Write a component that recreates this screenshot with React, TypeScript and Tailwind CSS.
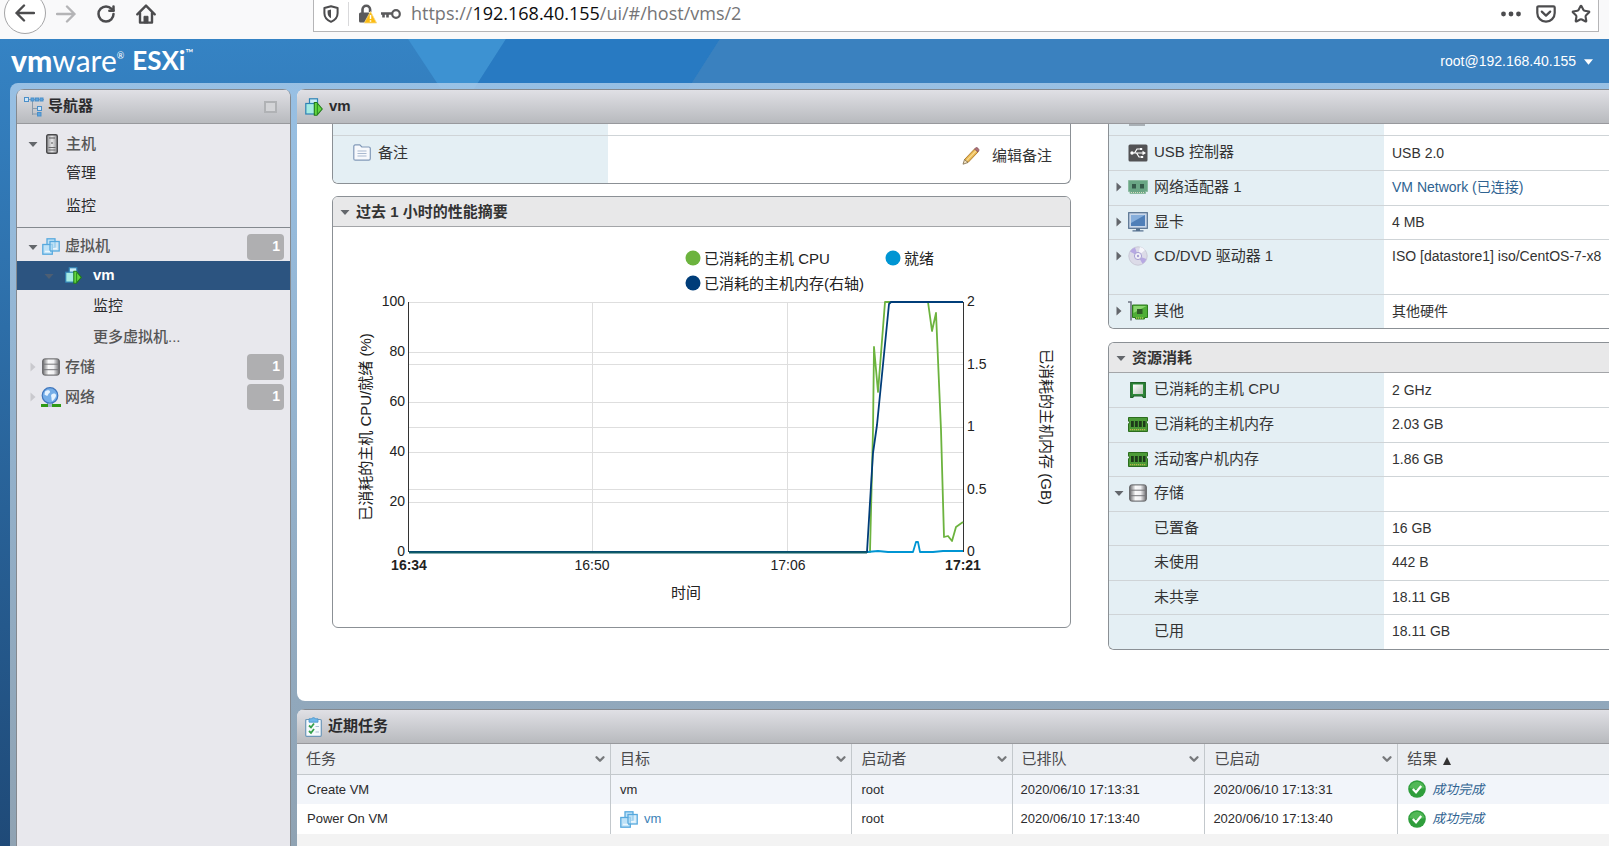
import { ChevronDown, RotateCw, Star } from 'lucide-react';
import React, { useState } from 'react';

type IconProps = { className?: string };

const BackIcon = ({ className }: IconProps) => (
  <svg viewBox="0 0 20 20" className={className} fill="none" stroke="currentColor" strokeWidth="2.4" strokeLinecap="round" strokeLinejoin="round">
    <path d="M19 10H1.5M9 2.5 1.5 10 9 17.5" />
  </svg>
);

const ForwardIcon = ({ className }: IconProps) => (
  <svg viewBox="0 0 20 20" className={className} fill="none" stroke="currentColor" strokeWidth="2.4" strokeLinecap="round" strokeLinejoin="round">
    <path d="M1 10h17.5M11 2.5l7.5 7.5-7.5 7.5" />
  </svg>
);

const HomeIcon = ({ className }: IconProps) => (
  <svg viewBox="0 0 20 20" className={className} fill="none" stroke="currentColor" strokeWidth="2.4" strokeLinecap="round" strokeLinejoin="round">
    <path d="M1.3 10.3 10 1.6l8.7 8.7" />
    <path d="M4 9v9.6h12V9" />
    <path d="M8 18.5v-6.2h4v6.2z" fill="currentColor" strokeWidth="1" />
  </svg>
);

const ShieldIcon = ({ className }: IconProps) => (
  <svg viewBox="0 0 16 18" className={className} fill="none" stroke="currentColor" strokeWidth="2">
    <path d="M8 1.2 14.6 3v5.2c0 4.2-2.8 6.9-6.6 8.6-3.8-1.7-6.6-4.4-6.6-8.6V3z" strokeLinejoin="round" />
    <path d="M8 4.6v8.6c-2.2-1.3-3.4-2.9-3.4-5.2V5.4z" fill="currentColor" stroke="none" />
  </svg>
);

const LockWarningIcon = ({ className }: IconProps) => (
  <svg viewBox="0 0 19 20" className={className}>
    <path d="M4.5 9V5.500a3.800 3.800 0 0 1 7.600 0V8" fill="none" stroke="#5a5a5c" strokeWidth="2.600" />
    <rect x="1" y="8.500" width="11" height="10" rx="1.500" fill="#5a5a5c" />
    <path d="M12.500 7.500 18.600 19H6.200z" fill="#fdbc11" stroke="#f5d98a" strokeWidth=".8" strokeLinejoin="round" />
    <path d="M12.500 11v4M12.500 16.300v1.400" stroke="#fff" strokeWidth="1.500" />
  </svg>
);

const KeyIcon = ({ className }: IconProps) => (
  <svg viewBox="0 0 20 12" className={className} fill="none" stroke="#5a5a5c">
    <circle cx="15" cy="6" r="3.800" strokeWidth="2.200" />
    <path d="M0 5.500h11.500M2.500 6v3.500M6.500 6v3.500" strokeWidth="2.600" />
  </svg>
);

const DotsIcon = ({ className }: IconProps) => (
  <svg viewBox="0 0 20 6" className={className} fill="currentColor">
    <circle cx="2.500" cy="3" r="2.400" />
    <circle cx="10" cy="3" r="2.400" />
    <circle cx="17.500" cy="3" r="2.400" />
  </svg>
);

const PocketIcon = ({ className }: IconProps) => (
  <svg viewBox="0 0 20 18" className={className} fill="none" stroke="currentColor" strokeWidth="2.200" strokeLinecap="round" strokeLinejoin="round">
    <path d="M2.600 1.300h14.800c.8 0 1.300.5 1.300 1.300V8a8.700 8.700 0 0 1-17.400 0V2.600c0-.8.5-1.300 1.300-1.300z" />
    <path d="m5.800 6.600 4.200 4 4.200-4" />
  </svg>
);

const TreeIcon = ({ className }: IconProps) => (
  <svg viewBox="0 0 20 20" className={className} fill="none" stroke="#4b8fc9">
    <path d="M5 2.500h15M8.500 4v14M8.500 11.500h5M8.500 17h5" stroke="#8a9bab" />
    <rect x=".5" y=".5" width="4" height="4" fill="#cfe6f8" />
    <rect x="7" y="1" width="3" height="3" fill="#5ea4dc" />
    <rect x="11.500" y="1" width="3" height="3" fill="#5ea4dc" />
    <rect x="16" y="1" width="3" height="3" fill="#5ea4dc" />
    <rect x="13.500" y="9.500" width="4" height="4" fill="#cfe6f8" />
    <rect x="13.500" y="15.500" width="3.500" height="3.500" fill="#5ea4dc" />
  </svg>
);

const HostIcon = ({ className }: IconProps) => (
  <svg viewBox="0 0 12 20" className={className}>
    <defs>
      <linearGradient id="tower">
        <stop offset="0" stopColor="#8d8d90" />
        <stop offset=".5" stopColor="#e8e8ea" />
        <stop offset="1" stopColor="#8d8d90" />
      </linearGradient>
    </defs>
    <rect x=".7" y=".7" width="10.600" height="18.600" rx="1.500" fill="url(#tower)" stroke="#4a4a4c" strokeWidth="1.400" />
    <path d="M3 4h6" stroke="#5b5b5d" strokeWidth="1.200" />
    <path d="M2.500 13.500h7M2.500 16h7" stroke="#6b6b6d" strokeWidth="1.200" />
    <circle cx="6" cy="9" r=".8" fill="#444" />
  </svg>
);

const VmsIcon = ({ className }: IconProps) => (
  <svg viewBox="0 0 18 17" className={className} fill="#bfe2f7" stroke="#57a9de" strokeWidth="1.300">
    <rect x="5" y=".8" width="8" height="9" />
    <rect x=".8" y="6.500" width="9.500" height="9.700" />
    <rect x="8" y="3.500" width="9.200" height="9.500" fillOpacity=".6" />
    <path d="M3 13.500h5M11 10.500h4" stroke="#eaf6fd" />
  </svg>
);

const VmRunningIcon = ({ className }: IconProps) => (
  <svg viewBox="0 0 18 18" className={className}>
    <rect x="4.500" y=".8" width="8" height="8" fill="#c9ecf7" stroke="#2f83b5" strokeWidth="1.200" />
    <rect x=".8" y="5.500" width="10" height="10.500" fill="#a5ebe3" stroke="#2f83b5" strokeWidth="1.200" />
    <path d="M9.300 4.500h2.500L17.300 11l-5.500 6.300H9.300z" fill="#62d63f" stroke="#207a1b" strokeWidth="1.100" strokeLinejoin="round" />
    <path d="M12.300 6v10" stroke="#207a1b" strokeWidth=".9" />
  </svg>
);

const StorageIcon = ({ className }: IconProps) => (
  <svg viewBox="0 0 18 18" className={className}>
    <defs>
      <linearGradient id="metal">
        <stop offset="0" stopColor="#6f6f72" />
        <stop offset=".35" stopColor="#fafafa" />
        <stop offset=".65" stopColor="#f0f0f2" />
        <stop offset="1" stopColor="#6b6b6e" />
      </linearGradient>
    </defs>
    <rect x=".7" y=".9" width="16.600" height="16.200" rx="2" fill="url(#metal)" stroke="#5c5c5e" />
    <path d="M1 6.200h16M1 11.700h16" stroke="#77777a" />
  </svg>
);

const NetworkIcon = ({ className }: IconProps) => (
  <svg viewBox="0 0 20 20" className={className}>
    <circle cx="9" cy="8.500" r="7.800" fill="#76aee8" stroke="#3f76bd" strokeWidth="1.200" />
    <path d="M4 4.500c2.500-2 4.500-1.500 5 0s-2 2-2 3.500-2.500.5-3.500-.5zM10.500 7.500c2-1.500 4-1 4.500.5s-1.500 4-3 5.500-1.500-1.500-1.500-2.500-1-2.500 0-3.500z" fill="#e6f3ff" />
    <path d="M6 16.300h6v1.500H6z" fill="#3f76bd" />
    <path d="M0 17h20v3H0z" fill="#2f9a16" />
    <path d="M7 16.500h4v3.500H7z" fill="#9fb6c9" />
  </svg>
);

const NotesIcon = ({ className }: IconProps) => (
  <svg viewBox="0 0 18 17" className={className}>
    <path d="M.8 2.500c0-1 .5-1.700 1.500-1.700h4.500l2 2.200h7c1 0 1.500.5 1.500 1.500v10c0 1-.5 1.700-1.500 1.700H2.300c-1 0-1.500-.5-1.500-1.500z" fill="#f7f9fc" stroke="#8199b8" strokeWidth="1.200" />
    <path d="M4.500 7h9M4.500 9.500h9M4.500 12h9" stroke="#a9b9cf" />
  </svg>
);

const PencilIcon = ({ className }: IconProps) => (
  <svg viewBox="0 0 18 18" className={className}>
    <path d="m2.500 12.500 10-10.500 3.500 3L6 15.500z" fill="#e9b851" stroke="#a9772c" strokeWidth=".9" />
    <path d="m4.300 13.800 10-10.300" stroke="#f9dc94" strokeWidth="1.200" />
    <path d="m12.500 2 1.500-1.300c1-.6 3.400 1.400 2.900 2.700L16 5z" fill="#b0737a" stroke="#86525a" strokeWidth=".8" />
    <path d="m2.500 12.500-1.500 4.700L6 15.500z" fill="#f4e3c2" stroke="#7b6a48" strokeWidth=".8" />
  </svg>
);

const UsbIcon = ({ className }: IconProps) => (
  <svg viewBox="0 0 20 18" className={className}>
    <rect x=".5" y=".5" width="19" height="17" rx="1.500" fill="#525254" />
    <path d="M3 9h12M6.500 9l2.500-4h3M8.500 9l2.500 4h2.500" stroke="#fff" strokeWidth="1.200" fill="none" />
    <circle cx="4" cy="9" r="1.700" fill="#fff" />
    <path d="m14.500 6.800 3.500 2.200-3.500 2.200zM12 4h2.200v2H12zM13 12h2.200v2H13z" fill="#fff" />
  </svg>
);

const NicIcon = ({ className }: IconProps) => (
  <svg viewBox="0 0 20 14" className={className}>
    <path d="M.5.5h19v11h-2v2H2v-2H.5z" fill="#6aa685" stroke="#8bbba0" />
    <rect x="4" y="4" width="4" height="4.500" fill="#35594a" />
    <rect x="12" y="4" width="4" height="4.500" fill="#35594a" />
    <path d="M3 12.500h13" stroke="#d7dcc0" strokeDasharray="1 1" />
  </svg>
);

const MonitorIcon = ({ className }: IconProps) => (
  <svg viewBox="0 0 20 20" className={className}>
    <rect x=".7" y=".7" width="18.600" height="15.600" fill="#c9d8ea" stroke="#55718f" strokeWidth="1.200" />
    <rect x="3" y="3" width="14" height="11" fill="#4f7fb8" />
    <path d="M3 3h14L3 11z" fill="#86aedb" />
    <path d="M8 16.500h4v2H8zM4.500 18.300h11v1.200h-11z" fill="#55718f" />
  </svg>
);

const DiscIcon = ({ className }: IconProps) => (
  <svg viewBox="0 0 20 20" className={className}>
    <circle cx="10" cy="10" r="9.200" fill="#dcdbe8" stroke="#c9c8d6" />
    <path d="M10 10 2 5.500A9 9 0 0 1 7 1.400zM10 10l8.500 3a9 9 0 0 1-4 4.800z" fill="#b7a9e2" />
    <path d="m10 10 2-9a9 9 0 0 1 5 3z" fill="#f6f6fb" />
    <circle cx="10" cy="10" r="3.600" fill="#f2f1f8" stroke="#a79fd2" />
    <circle cx="10" cy="10" r="1.200" fill="#a79fd2" />
  </svg>
);

const CardIcon = ({ className }: IconProps) => (
  <svg viewBox="0 0 20 20" className={className}>
    <path d="M0 1h3v18.500" fill="none" stroke="#6c7480" strokeWidth="1.600" />
    <path d="M4.500 4h15v12.500h-3v1.500h-9v-1.500h-3z" fill="#4fae37" stroke="#2c7b1d" />
    <path d="M5.500 5h13L5.500 12z" fill="#8bd66f" />
    <rect x="9" y="8" width="5.500" height="5" fill="#2f5c27" />
    <path d="M8 17h8" stroke="#e1cf5d" strokeDasharray="1 1" />
  </svg>
);

const CpuIcon = ({ className }: IconProps) => (
  <svg viewBox="0 0 16 16" className={className}>
    <defs>
      <linearGradient id="die" x2="1" y2="1">
        <stop offset="0" stopColor="#ffffff" />
        <stop offset="1" stopColor="#b9c4b9" />
      </linearGradient>
    </defs>
    <path d="M.7.7h14.600v14.600h-1.800l-1.300-1.500H4l-1.300 1.500H.7z" fill="#2f8a3a" stroke="#1f6428" strokeWidth="1.200" />
    <rect x="3" y="2.500" width="10" height="9.500" fill="url(#die)" />
  </svg>
);

const MemoryIcon = ({ className }: IconProps) => (
  <svg viewBox="0 0 20 15" className={className}>
    <path d="M.5.5h19v3.500l-1.200 1.200L19.500 7v7.500H.5V7l1.200-1.800L.5 4z" fill="#4b9a37" stroke="#2c6d1e" />
    <path d="M3 4h2.800v6H3zM7 4h2.800v6H7zM11 4h2.800v6H11zM15 4h2.500v6H15z" fill="#1d3b1a" />
    <path d="M2 12.700h16" stroke="#b9b64a" strokeWidth="1.200" strokeDasharray="1.200 .8" />
  </svg>
);

const TasksIcon = ({ className }: IconProps) => (
  <svg viewBox="0 0 17 20" className={className}>
    <rect x=".7" y="2.500" width="15.600" height="16.800" rx="1" fill="#f6fafd" stroke="#6d97b8" strokeWidth="1.200" />
    <path d="M4 1.800h2.500C7 .3 10 .3 10.500 1.800H13v3.400H4z" fill="#6db7ea" stroke="#4892c8" strokeWidth=".8" />
    <path d="m4 8.500 2 2 3-4M4 14l2 2 3-4" fill="none" stroke="#35a04b" strokeWidth="1.800" />
    <path d="M10.500 9.500h3.500M10.500 15h3.500" stroke="#a9c0d2" />
  </svg>
);

const SuccessIcon = ({ className }: IconProps) => (
  <svg viewBox="0 0 18 18" className={className}>
    <circle cx="9" cy="9" r="8.800" fill="#2f9e3c" />
    <path d="M1.500 8a7.600 7.600 0 0 1 15 0c-4 1.500-11 1.500-15 0z" fill="#52b857" />
    <path d="m4.800 9 3.200 3.300 5.200-6.300" fill="none" stroke="#fff" strokeWidth="2.200" />
  </svg>
);

const Caret = ({ open, faded }: { open?: boolean; faded?: boolean }) => (
  <svg viewBox="0 0 10 10" className={`size-[10px] shrink-0 ${faded ? 'text-[#c9c9ce]' : 'text-[#63666b]'}`} fill="currentColor">
    {open ? <path d="M.5 3h9L5 8z" /> : <path d="M2.500.5v9L7.500 5z" />}
  </svg>
);

interface DetailRow {
  label: string;
  value: string;
  icon?: React.FC<IconProps>;
  iconClass?: string;
  caret?: 'open' | 'closed';
  link?: boolean;
  tall?: boolean;
}

const hardware: DetailRow[] = [
  { label: 'USB 控制器', value: 'USB 2.0', icon: UsbIcon, iconClass: 'h-[18px] w-5' },
  { label: '网络适配器 1', value: 'VM Network (已连接)', icon: NicIcon, iconClass: 'h-[14px] w-5', caret: 'closed', link: true },
  { label: '显卡', value: '4 MB', icon: MonitorIcon, iconClass: 'size-5', caret: 'closed' },
  { label: 'CD/DVD 驱动器 1', value: 'ISO [datastore1] iso/CentOS-7-x8', icon: DiscIcon, iconClass: 'size-5', caret: 'closed', tall: true },
  { label: '其他', value: '其他硬件', icon: CardIcon, iconClass: 'size-5', caret: 'closed' },
];

const resources: DetailRow[] = [
  { label: '已消耗的主机 CPU', value: '2 GHz', icon: CpuIcon, iconClass: 'size-4' },
  { label: '已消耗的主机内存', value: '2.03 GB', icon: MemoryIcon, iconClass: 'h-[15px] w-5' },
  { label: '活动客户机内存', value: '1.86 GB', icon: MemoryIcon, iconClass: 'h-[15px] w-5' },
  { label: '存储', value: '', icon: StorageIcon, iconClass: 'size-[18px]', caret: 'open' },
  { label: '已置备', value: '16 GB' },
  { label: '未使用', value: '442 B' },
  { label: '未共享', value: '18.11 GB' },
  { label: '已用', value: '18.11 GB' },
];

const DetailTable = ({ rows }: { rows: DetailRow[] }) => (
  <table className="w-full table-fixed border-collapse">
    <tbody>
      {rows.map((row) => {
        const Icon = row.icon;
        return (
          <tr
            key={row.label}
            className={`border-b border-[#cfd4d7] last:border-b-0 ${row.tall ? 'h-[55px]' : 'h-[34px] even:h-[35px]'}`}
          >
            <th scope="row" className="w-[275px] bg-[#e4eff4] p-0 text-left align-top font-normal">
              <div className="flex h-[33px] items-center pl-[2px] text-[15px] text-[#333]">
                <span className="flex w-4 justify-center">
                  {row.caret && (
                    <button type="button" aria-label={`展开 ${row.label}`}>
                      <Caret open={row.caret === 'open'} />
                    </button>
                  )}
                </span>
                <span className="flex w-[27px] items-center pr-[5px]">
                  {Icon && <Icon className={`mx-auto shrink-0 ${row.iconClass}`} />}
                </span>
                {row.label}
              </div>
            </th>
            <td className="overflow-hidden p-0 align-top text-sm whitespace-nowrap text-[#333]">
              <div className="flex h-[33px] items-center pl-2">
                {row.link ? (
                  <a href="#network" className="text-[#2f6391]">{row.value}</a>
                ) : (
                  row.value
                )}
              </div>
            </td>
          </tr>
        );
      })}
    </tbody>
  </table>
);

const cpuLine = '76,325 537,325 540,203 541,120 545,165 552,75 595,75 599,104 603,86 608,203 611,310 615,309 619,314 623,300 630,295';
const memoryLine = '76,325 534,325 540,226 544,198 556,77 558,75 630,75';
const readyLine = '76,325 534,325 545,324 555,325 580,325 583,315 585,315 587,325 600,325 610,324 630,324';

const PerformanceChart = () => (
  <svg viewBox="0 0 737 400" className="block w-full" role="img" aria-label="过去 1 小时的性能摘要">
    <g stroke="#dedede">
      {[75, 125, 175, 225, 275].map((y) => <path key={y} d={`M76 ${y}.5H630`} />)}
      {[137, 200, 262].map((y) => <path key={y} d={`M76 ${y}.5H630`} />)}
      <path d="M259.500 75V325M454.500 75V325" />
    </g>
    <path d="M75.500 75V325M630.500 75V325" stroke="#333" fill="none" />
    <g fill="none" strokeWidth="1.800" strokeLinejoin="round">
      <polyline points={cpuLine} stroke="#6cb33e" />
      <polyline points={readyLine} stroke="#0095d3" />
      <polyline points={memoryLine} stroke="#003d79" />
      <path d="M76 325.500H534" stroke="#0f5c66" />
    </g>
    <g fontSize="14" fill="#222">
      {[0, 20, 40, 60, 80, 100].map((v) => (
        <text key={v} x="72" y={329 - v * 2.5} textAnchor="end">{v}</text>
      ))}
      {[0, 0.5, 1, 1.5, 2].map((v) => (
        <text key={v} x="634" y={329 - v * 125}>{v}</text>
      ))}
      <g textAnchor="middle">
        <text x="76" y="343" fontWeight="bold">16:34</text>
        <text x="259" y="343">16:50</text>
        <text x="455" y="343">17:06</text>
        <text x="630" y="343" fontWeight="bold">17:21</text>
      </g>
    </g>
    <g fontSize="15" fill="#222">
      <circle cx="360" cy="31" r="7.500" fill="#6cb33e" />
      <text x="371" y="37">已消耗的主机 CPU</text>
      <circle cx="560" cy="31" r="7.500" fill="#0095d3" />
      <text x="571" y="37">就绪</text>
      <circle cx="360" cy="56" r="7.500" fill="#003d79" />
      <text x="371" y="62">已消耗的主机内存(右轴)</text>
      <g textAnchor="middle">
        <text x="353" y="371">时间</text>
        <text transform="translate(38 200) rotate(-90)">已消耗的主机 CPU/就绪 (%)</text>
        <text transform="translate(708 200) rotate(90)">已消耗的主机内存 (GB)</text>
      </g>
    </g>
  </svg>
);

const BrowserBar = () => {
  const [url, setUrl] = useState('https://192.168.40.155/ui/#/host/vms/2');
  const [scheme, host, path] = url.match(/^(\w+:\/\/)?([^/]*)(.*)$/)?.slice(1) ?? [];

  return (
    <div className="flex h-[39px] items-start overflow-hidden bg-[#f9f9fa] pr-[10px] text-[#4c4c4e]">
      <button type="button" aria-label="后退" className="-mt-2 ml-1 flex size-[42px] shrink-0 items-center justify-center rounded-full border border-[#a5a5a7] bg-white">
        <BackIcon className="size-5" />
      </button>
      <div className="flex h-[27px] w-[267px] shrink-0 items-center gap-5 pl-[10px]">
        <button type="button" aria-label="前进" className="text-[#b4b4b6]">
          <ForwardIcon className="size-5" />
        </button>
        <button type="button" aria-label="刷新">
          <RotateCw className="size-5" strokeWidth={3} />
        </button>
        <button type="button" aria-label="主页">
          <HomeIcon className="size-5" />
        </button>
      </div>
      <div className="flex h-8 min-w-0 flex-1 items-center border border-t-0 border-[#b5b5b7] bg-white pb-1">
        <ShieldIcon className="ml-[9px] h-[18px] w-4 shrink-0" />
        <span className="mr-[9px] ml-[9px] h-6 w-px bg-[#d9d9db]" />
        <LockWarningIcon className="h-5 w-[19px] shrink-0" />
        <KeyIcon className="ml-1 h-3 w-5 shrink-0" />
        <div className="relative ml-[10px] flex-1 font-['Open_Sans','Noto_Sans',sans-serif] text-[18px] leading-[27px]">
          <input
            type="text"
            aria-label="地址"
            value={url}
            onChange={(e) => setUrl(e.target.value)}
            className="block w-full bg-transparent text-transparent caret-black outline-none"
          />
          <span aria-hidden="true" className="pointer-events-none absolute inset-0 whitespace-pre text-[#757577]">
            {scheme}
            <span className="text-[#0c0c0d]">{host}</span>
            {path}
          </span>
        </div>
        <div className="flex items-center gap-[15px] pr-[7px]">
          <button type="button" aria-label="页面操作"><DotsIcon className="h-[6px] w-5" /></button>
          <button type="button" aria-label="保存到 Pocket"><PocketIcon className="h-[18px] w-5" /></button>
          <button type="button" aria-label="收藏"><Star className="size-5" strokeWidth={2.5} /></button>
        </div>
      </div>
    </div>
  );
};

const PanelHeader = ({ children }: { children: React.ReactNode }) => (
  <div className="flex h-[35px] shrink-0 items-center border-t border-b border-t-[#84898f] border-b-[#98999d] bg-linear-to-b from-[#e0e0e5] to-[#b8babe] text-[15px] font-bold text-[#2b2b2d]">
    {children}
  </div>
);

const Badge = ({ children }: { children: React.ReactNode }) => (
  <span className="mr-[6px] ml-auto flex h-[26px] w-[37px] justify-end rounded bg-[#afafb1] pr-1 text-sm leading-[24px] font-bold text-white">
    {children}
  </span>
);

const Navigator = () => (
  <nav className="flex w-[275px] shrink-0 flex-col overflow-hidden rounded-t-lg border-x border-[#84898f] bg-[#e8e8ed] text-[15px]">
    <PanelHeader>
      <TreeIcon className="mr-1 ml-[7px] size-5" />
      导航器
      <button type="button" aria-label="最小化" className="mr-[13px] ml-auto h-3 w-[13px] border-2 border-[#b0b2b5] bg-[#d3d4d7]" />
    </PanelHeader>
    <ul className="border-b border-[#84898f] pt-[7px] pb-1">
      <li className="flex h-[26px] items-center font-medium text-[#555]">
        <button type="button" aria-label="折叠主机" className="ml-[11px]"><Caret open /></button>
        <HostIcon className="mr-2 ml-2 h-5 w-3" />
        <a href="#host">主机</a>
      </li>
      <li className="flex h-8 items-center pl-[49px] text-[#2b2b2d]"><a href="#manage">管理</a></li>
      <li className="flex h-[34px] items-center pl-[49px] text-[#2b2b2d]"><a href="#monitor">监控</a></li>
    </ul>
    <ul className="pt-1">
      <li className="flex h-[29px] items-center font-medium text-[#555]">
        <button type="button" aria-label="折叠虚拟机" className="ml-[11px]"><Caret open /></button>
        <VmsIcon className="mx-1 h-[17px] w-[18px]" />
        <a href="#vms" className="pl-[1px]">虚拟机</a>
        <Badge>1</Badge>
      </li>
      <li className="flex h-[29px] items-center bg-[#2c5480] font-bold text-white">
        <button type="button" aria-label="折叠 vm" className="ml-[27px] opacity-60"><Caret open /></button>
        <VmRunningIcon className="mr-[11px] ml-[11px] size-[17px]" />
        <a href="#vm">vm</a>
      </li>
      <li className="flex h-8 items-center pl-[76px] text-[#2b2b2d]"><a href="#vm-monitor">监控</a></li>
      <li className="flex h-[30px] items-center pl-[76px] font-medium text-[#555]"><a href="#more">更多虚拟机...</a></li>
      <li className="flex h-[30px] items-center font-medium text-[#555]">
        <button type="button" aria-label="展开存储" className="ml-[11px]"><Caret faded /></button>
        <StorageIcon className="mx-1 size-[18px]" />
        <a href="#storage" className="pl-[1px]">存储</a>
        <Badge>1</Badge>
      </li>
      <li className="flex h-[30px] items-center font-medium text-[#555]">
        <button type="button" aria-label="展开网络" className="ml-[11px]"><Caret faded /></button>
        <NetworkIcon className="mx-[3px] size-5" />
        <a href="#networking" className="pl-[1px]">网络</a>
        <Badge>1</Badge>
      </li>
    </ul>
  </nav>
);

const CardTitle = ({ children }: { children: React.ReactNode }) => (
  <h2 className="flex h-[30px] items-center gap-[6px] border-b border-[#a3a5a8] bg-[#e8e8e9] pt-px pl-[7px] text-[15px] font-bold text-[#333]">
    <Caret open />
    {children}
  </h2>
);

const VmPanel = () => (
  <main className="flex min-h-0 flex-1 flex-col overflow-hidden rounded-tl-lg rounded-bl-lg bg-white">
    <PanelHeader>
      <VmRunningIcon className="mr-[6px] ml-2 size-[18px]" />
      <h1>vm</h1>
    </PanelHeader>
    <div className="grid min-h-0 flex-1 grid-cols-[739fr_501fr] items-start gap-[37px] overflow-hidden pl-[35px]">
      <div className="flex flex-col gap-3">
        <section className="overflow-hidden rounded-b-md border border-t-0 border-[#8b9095]">
          <div className="flex h-3 border-b border-[#cfd4d7]">
            <div className="w-[275px] bg-[#e4eff4]" />
          </div>
          <div className="flex h-[47px] text-[15px] text-[#333]">
            <div className="flex w-[275px] items-start bg-[#e4eff4] pt-[6px] pl-5">
              <NotesIcon className="mt-[2px] mr-[7px] h-[17px] w-[18px]" />
              备注
            </div>
            <div className="flex flex-1 items-start justify-end pt-[9px] pr-[18px]">
              <button type="button" className="flex items-center gap-3">
                <PencilIcon className="size-[18px]" />
                编辑备注
              </button>
            </div>
          </div>
        </section>
        <section className="overflow-hidden rounded-md border border-[#8b9095]">
          <CardTitle>过去 1 小时的性能摘要</CardTitle>
          <PerformanceChart />
        </section>
      </div>
      <div className="flex min-w-0 flex-col gap-[13px]">
        <section className="overflow-hidden rounded-bl-md border border-t-0 border-r-0 border-[#8b9095]">
          <div className="flex h-3 border-b border-[#cfd4d7]">
            <div className="w-[275px] bg-[#e4eff4] pl-5">
              <div className="h-[2px] w-4 bg-[#a9b0b5]" />
            </div>
          </div>
          <DetailTable rows={hardware} />
        </section>
        <section className="overflow-hidden rounded-l-md border border-r-0 border-[#8b9095]">
          <CardTitle>资源消耗</CardTitle>
          <DetailTable rows={resources} />
        </section>
      </div>
    </div>
  </main>
);

const columns = [
  { name: '任务', width: 'w-[23.9%]' },
  { name: '目标', width: 'w-[18.4%]' },
  { name: '启动者', width: 'w-[12.2%]' },
  { name: '已排队', width: 'w-[14.7%]' },
  { name: '已启动', width: 'w-[14.7%]' },
];

const tasks = [
  { name: 'Create VM', target: 'vm', linked: false, time: '2020/06/10 17:13:31' },
  { name: 'Power On VM', target: 'vm', linked: true, time: '2020/06/10 17:13:40' },
];

const RecentTasks = () => (
  <section className="shrink-0 overflow-hidden rounded-tl-lg bg-[#f3f3f3] pb-3">
    <PanelHeader>
      <TasksIcon className="mr-[6px] ml-2 h-5 w-[17px]" />
      <h2>近期任务</h2>
    </PanelHeader>
    <table className="w-full table-fixed border-collapse text-left text-[13px] text-[#2b2b2d]">
      <thead>
        <tr className="h-[30px] border-b border-[#c3c8cc] bg-[#ebeef2] text-[15px] text-[#4a4a4c]">
          {columns.map(({ name, width }) => (
            <th key={name} scope="col" className={`${width} border-r border-[#c3c8cc] py-0 pr-[3px] pl-[9px] font-normal`}>
              <div className="flex items-center justify-between">
                {name}
                <button type="button" aria-label={`${name} 列菜单`}>
                  <ChevronDown className="size-[14px] text-[#77797c]" strokeWidth={4} />
                </button>
              </div>
            </th>
          ))}
          <th scope="col" aria-sort="ascending" className="py-0 pl-[9px] font-normal">
            <button type="button" className="flex items-center gap-[6px]">
              结果
              <svg viewBox="0 0 8 8" className="mt-1 size-2" fill="#333"><path d="M4 0 8 8H0z" /></svg>
            </button>
          </th>
        </tr>
      </thead>
      <tbody>
        {tasks.map((task) => (
          <tr key={task.name} className="h-[30px] odd:bg-[#f2f5fa] even:bg-white">
            <td className="border-r border-[#c3c8cc] py-0 pl-[10px]">{task.name}</td>
            <td className="border-r border-[#c3c8cc] py-0 pl-[9px]">
              {task.linked ? (
                <a href="#vm" className="flex items-center gap-[6px] text-[#3c82b8]">
                  <VmsIcon className="h-[17px] w-[18px]" />
                  {task.target}
                </a>
              ) : (
                task.target
              )}
            </td>
            <td className="border-r border-[#c3c8cc] py-0 pl-[9px]">root</td>
            <td className="border-r border-[#c3c8cc] py-0 pl-2">{task.time}</td>
            <td className="border-r border-[#c3c8cc] py-0 pl-2">{task.time}</td>
            <td className="py-0 pl-[10px]">
              <a href="#result" className="flex items-center gap-[6px] text-[#2f6391] italic">
                <SuccessIcon className="size-[18px]" />
                成功完成
              </a>
            </td>
          </tr>
        ))}
      </tbody>
    </table>
  </section>
);

export default function App() {
  return (
    <div className="flex h-screen flex-col overflow-hidden font-['Liberation_Sans','Noto_Sans_CJK_SC',sans-serif]">
      <BrowserBar />
      <div className="relative flex min-h-0 flex-1 flex-col bg-linear-to-b from-[#3583c4] to-[#1f4a78]">
        <svg aria-hidden="true" className="absolute top-0 left-0 h-[50px] w-full">
          <path d="M408 0h98l-32 50h-33z" fill="#3d92d2" />
          <path d="M506 0h214l-32 50H474z" fill="#287ac2" />
          <path d="M720 0h2400v50H688z" fill="#3a81bf" />
        </svg>
        <header className="relative flex h-11 shrink-0 items-center justify-between pr-4 text-white">
          <div className="flex items-start pb-[2px] pl-[11px] font-['Lato','Open_Sans',sans-serif] leading-[40px]">
            <span className="text-[30px] font-black">vm</span>
            <span className="text-[30px]">ware</span>
            <span className="text-[9px] leading-[32px]">®</span>
            <span className="ml-2 text-[26px] font-bold">ESXi</span>
            <span className="text-[11px] leading-[26px]">™</span>
          </div>
          <button type="button" className="flex items-center gap-2 text-sm">
            root@192.168.40.155
            <svg viewBox="0 0 10 6" className="mt-[2px] h-[6px] w-[9px]" fill="currentColor"><path d="M0 0h10L5 6z" /></svg>
          </button>
        </header>
        <div className="relative ml-[10px] flex min-h-0 flex-1 gap-[6px] rounded-tl-lg bg-linear-to-b from-[#a9cbea]/85 to-[#a3b2bd]/85 pt-[6px] pl-[6px]">
          <Navigator />
          <div className="flex min-w-0 flex-1 flex-col gap-2">
            <VmPanel />
            <RecentTasks />
          </div>
        </div>
      </div>
    </div>
  );
}
